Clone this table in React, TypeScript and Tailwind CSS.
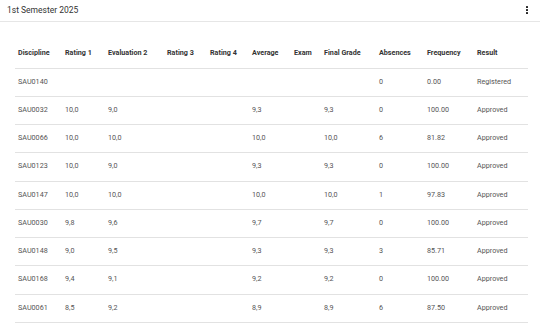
import React from "react";

const cols = [
  { label: "Discipline", w: "w-[47px]" },
  { label: "Rating 1", w: "w-[43px]" },
  { label: "Evaluation 2", w: "w-[59px]" },
  { label: "Rating 3", w: "w-[43px]" },
  { label: "Rating 4", w: "w-[42px]" },
  { label: "Average", w: "w-[42px]" },
  { label: "Exam", w: "w-[30px]" },
  { label: "Final Grade", w: "w-[55px]" },
  { label: "Absences", w: "w-[48px]" },
  { label: "Frequency", w: "w-[50px]" },
  { label: "Result", w: "w-[54px]" },
];

const rows: string[][] = [
  ["SAU0140", "", "", "", "", "", "", "", "0", "0.00", "Registered"],
  ["SAU0032", "10,0", "9,0", "", "", "9,3", "", "9,3", "0", "100.00", "Approved"],
  ["SAU0066", "10,0", "10,0", "", "", "10,0", "", "10,0", "6", "81.82", "Approved"],
  ["SAU0123", "10,0", "9,0", "", "", "9,3", "", "9,3", "0", "100.00", "Approved"],
  ["SAU0147", "10,0", "10,0", "", "", "10,0", "", "10,0", "1", "97.83", "Approved"],
  ["SAU0030", "9,8", "9,6", "", "", "9,7", "", "9,7", "0", "100.00", "Approved"],
  ["SAU0148", "9,0", "9,5", "", "", "9,3", "", "9,3", "3", "85.71", "Approved"],
  ["SAU0168", "9,4", "9,1", "", "", "9,2", "", "9,2", "0", "100.00", "Approved"],
  ["SAU0061", "8,5", "9,2", "", "", "8,9", "", "8,9", "6", "87.50", "Approved"],
];

export default function App() {
  return (
    <div className="w-[540px] h-[334px] bg-white font-['Roboto',sans-serif] overflow-hidden">
      {/* Card header */}
      <div className="h-[22px] flex items-center justify-between pl-[7px] pr-[12px] border-b border-[#e6e6e6]">
        <span className="text-[8.5px] text-[#333] leading-none">1st Semester 2025</span>
        <div className="flex flex-col gap-[0.8px] pb-[1px]">
          <span className="block w-[2.4px] h-[2.4px] rounded-[0.5px] bg-[#222]" />
          <span className="block w-[2.4px] h-[2.4px] rounded-[0.5px] bg-[#222]" />
          <span className="block w-[2.4px] h-[2.4px] rounded-[0.5px] bg-[#222]" />
        </div>
      </div>

      {/* Grades table */}
      <div className="pt-[18px] pl-[15px]">
        <table className="table-fixed w-[513px] border-collapse">
          <colgroup>
            {cols.map((c) => (
              <col key={c.label} className={c.w} />
            ))}
          </colgroup>
          <thead>
            <tr className="h-[28px] border-b border-[#e2e2e2]">
              {cols.map((c) => (
                <th
                  key={c.label}
                  className="pl-[3px] text-left text-[7.2px] font-bold text-[#333] whitespace-nowrap align-middle"
                >
                  {c.label}
                </th>
              ))}
            </tr>
          </thead>
          <tbody>
            {rows.map((r) => (
              <tr key={r[0]} className="h-[28.25px] border-b border-[#e2e2e2]">
                {r.map((v, i) => (
                  <td
                    key={i}
                    className="pl-[3px] text-left text-[7.2px] text-[#555] whitespace-nowrap align-middle"
                  >
                    {v}
                  </td>
                ))}
              </tr>
            ))}
          </tbody>
        </table>
      </div>
    </div>
  );
}
